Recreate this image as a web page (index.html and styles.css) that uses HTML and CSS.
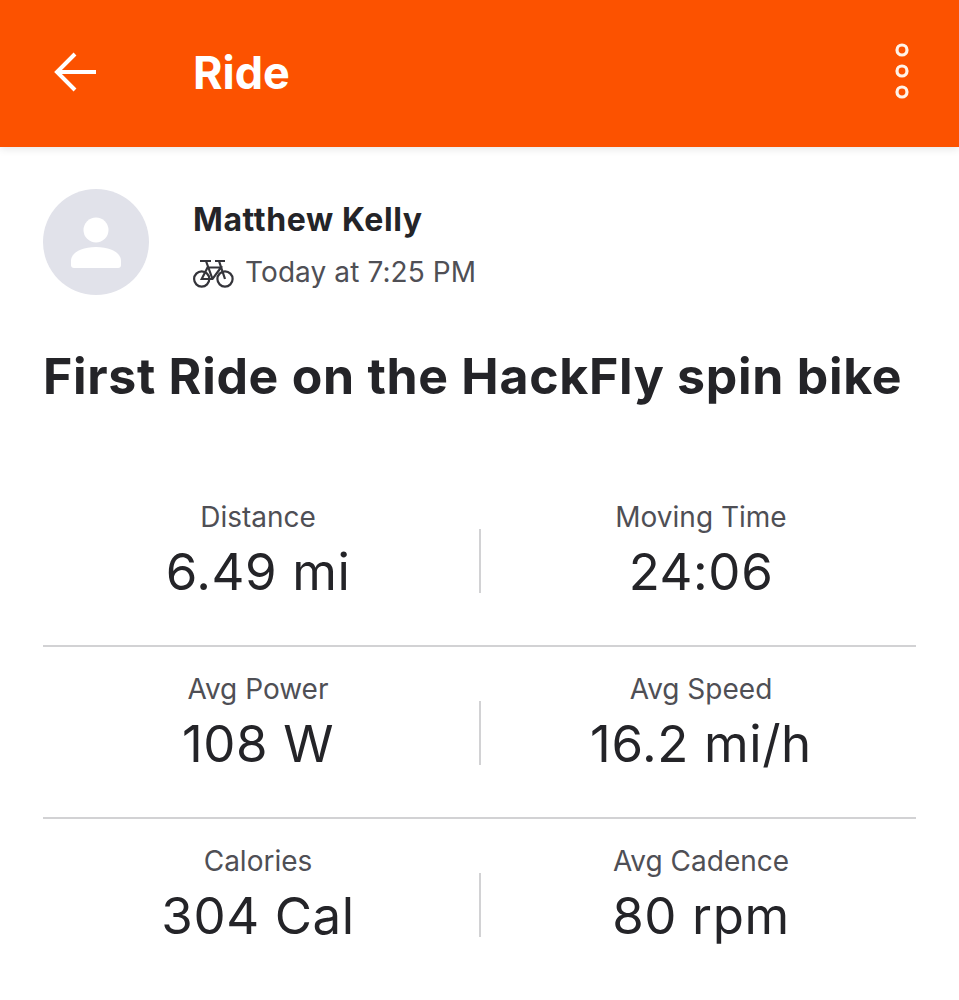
FILE: index.html
```html
<!DOCTYPE html>
<html lang="en">
<head>
<meta charset="utf-8">
<title>Ride</title>
<link rel="stylesheet" href="styles.css">
</head>
<body>
<header class="appbar">
  <svg class="back" width="46" height="40" viewBox="0 0 46 40" fill="none" stroke="#fff" stroke-width="4"><path d="M44 20H5M23 2 5 20l18 18"/></svg>
  <h1 class="appbar-title">Ride</h1>
  <svg class="more" width="14" height="56" viewBox="0 0 14 56" fill="none" stroke="#fff3e8" stroke-width="3.2"><circle cx="7" cy="7" r="5"/><circle cx="7" cy="28" r="5"/><circle cx="7" cy="49" r="5"/></svg>
</header>
<main class="content">
  <section class="athlete">
    <svg class="avatar" width="106" height="106" viewBox="0 0 106 106"><circle cx="53" cy="53" r="53" fill="#e1e2ea"/><circle cx="53" cy="41" r="12.5" fill="#fff"/><path fill="#fff" d="M31 79a3 3 0 0 1-3-3v-4C28 64 38 58 53 58s25 6 25 14v4a3 3 0 0 1-3 3z"/></svg>
    <div class="athlete-info">
      <div class="name">Matthew Kelly</div>
      <div class="meta">
        <svg class="bike" width="44" height="32" viewBox="6 1 44 32" fill="none" stroke="#34343a" stroke-width="2.2"><circle cx="15.7" cy="24" r="7.6"/><circle cx="39" cy="24" r="7.6"/><path d="M15.7 24 21.5 12.5H35L26.5 24zM20 6l6.5 18M33 6l6 18M14 6h11M29 6h10"/></svg>
        <span>Today at 7:25 PM</span>
      </div>
    </div>
  </section>
  <h2 class="title">First Ride on the HackFly spin bike</h2>
  <section class="stats">
    <div class="row">
      <div class="stat"><div class="label">Distance</div><div class="value">6.49 mi</div></div>
      <div class="divider"></div>
      <div class="stat"><div class="label">Moving Time</div><div class="value">24:06</div></div>
    </div>
    <div class="row">
      <div class="stat"><div class="label">Avg Power</div><div class="value">108 W</div></div>
      <div class="divider"></div>
      <div class="stat"><div class="label">Avg Speed</div><div class="value">16.2 mi/h</div></div>
    </div>
    <div class="row">
      <div class="stat"><div class="label">Calories</div><div class="value">304 Cal</div></div>
      <div class="divider"></div>
      <div class="stat"><div class="label">Avg Cadence</div><div class="value">80 rpm</div></div>
    </div>
  </section>
</main>
</body>
</html>
```
FILE: styles.css
```css
* { box-sizing: border-box; }
html, body { margin: 0; padding: 0; background: #fff; }
body { width: 959px; height: 1000px; overflow: hidden; font-family: "Inter", "Liberation Sans", sans-serif; color: #242428; }
.appbar { height: 147px; background: #fc5200; display: flex; align-items: center; padding: 0 50px 4px 52px; box-shadow: 0 2px 8px rgba(0,0,0,.1); }
.back { flex: none; }
.appbar-title { margin: 2px 0 0 95px; flex: 1; font-size: 45px; font-weight: 700; color: #fff; }
.more { flex: none; margin-bottom: 2px; }
.content { padding: 42px 43px 0; }
.athlete { display: flex; align-items: center; gap: 44px; }
.avatar { flex: none; }
.athlete-info { display: flex; flex-direction: column; gap: 16px; padding-top: 5px; }
.name { font-size: 32px; font-weight: 700; line-height: 38px; letter-spacing: .6px; }
.meta { display: flex; align-items: center; gap: 9px; font-size: 28px; letter-spacing: .1px; color: #4f4f55; line-height: 34px; }
.bike { flex: none; margin-left: -1px; }
.title { margin: 49px 0 0; font-size: 50px; font-weight: 700; line-height: 64px; letter-spacing: .7px; white-space: nowrap; }
.stats { margin-top: 67px; width: 873px; }
.row { display: grid; grid-template-columns: 430px 2px 1fr; column-gap: 5.5px; height: 172px; align-items: start; border-bottom: 2px solid #d2d2d4; }
.row:last-child { border-bottom: 0; }
.stat { padding-top: 24px; text-align: center; }
.divider { height: 64px; margin-top: 54px; background: #d2d2d4; }
.label { font-size: 28px; line-height: 36px; color: #4f4f55; }
.value { font-size: 51px; line-height: 74px; letter-spacing: .6px; }
```
